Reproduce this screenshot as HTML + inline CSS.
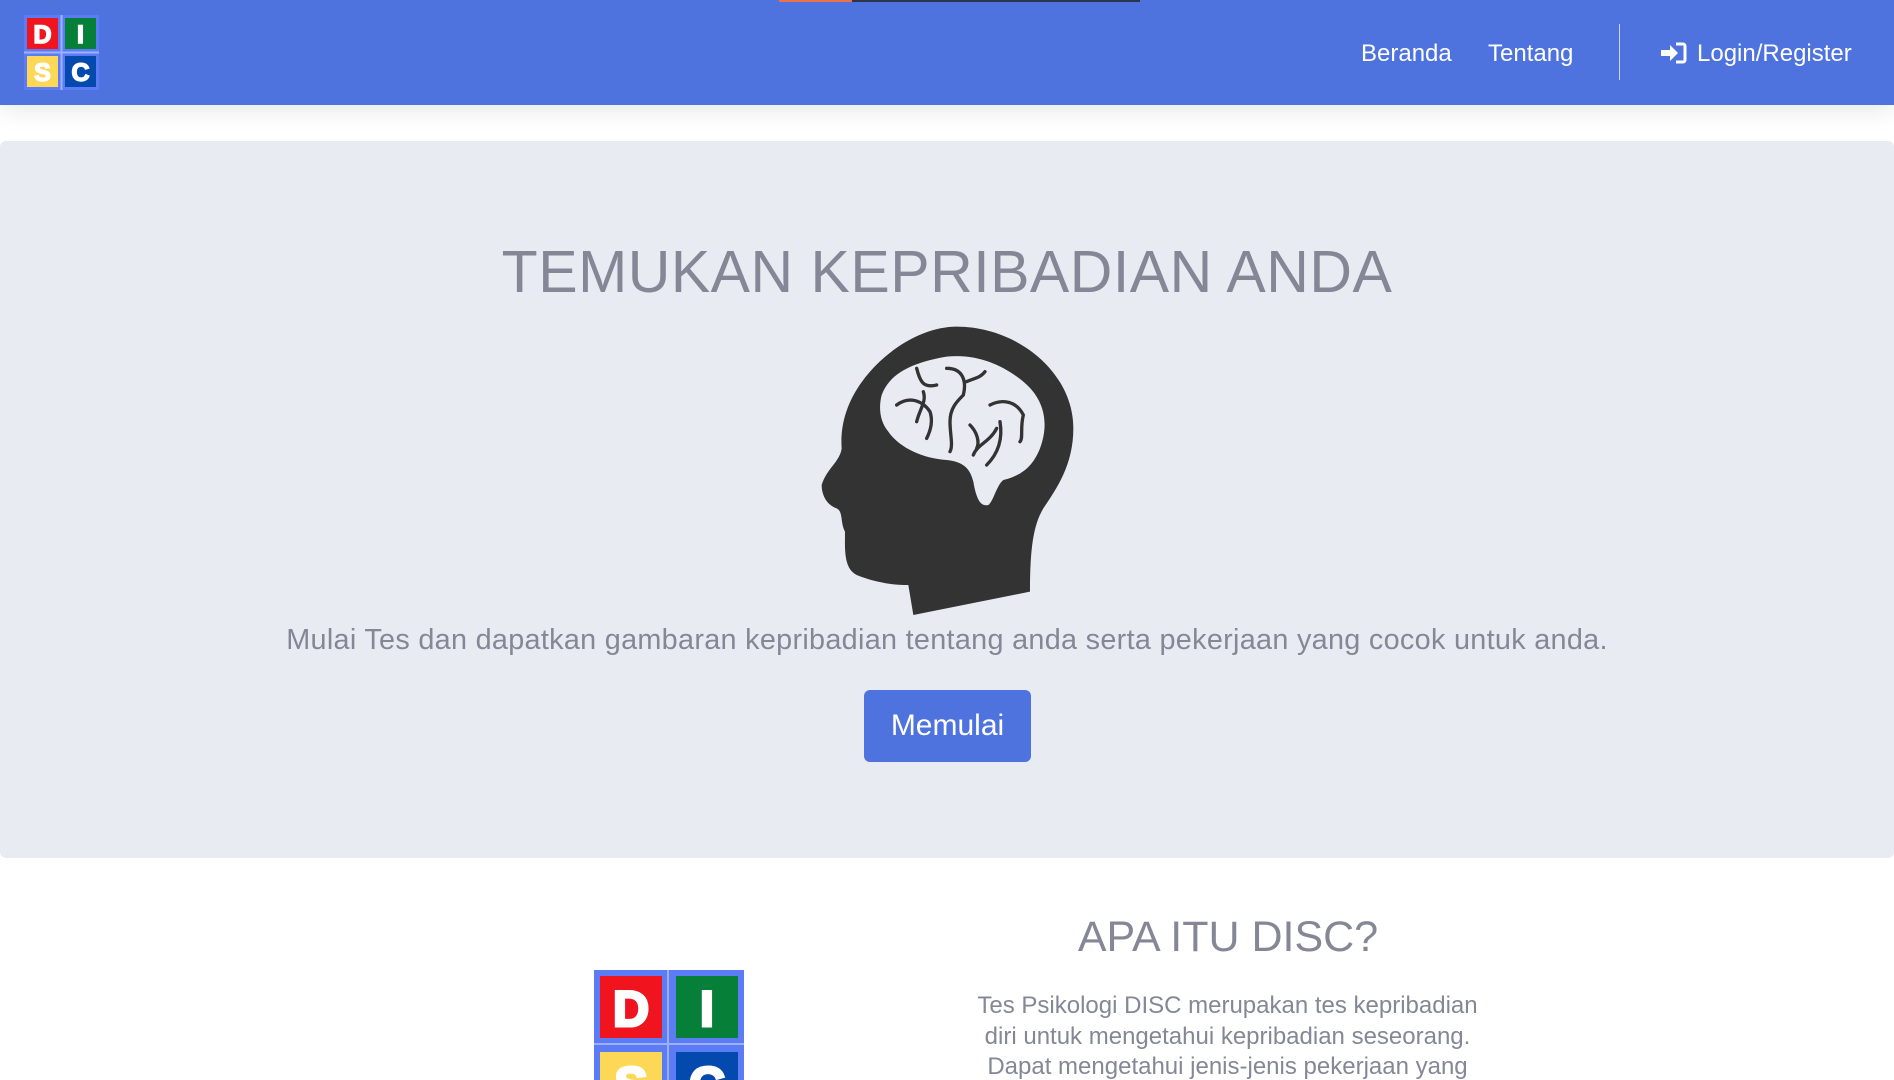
<!DOCTYPE html>
<html><head><meta charset="utf-8"><style>
*{margin:0;padding:0;box-sizing:border-box}
html,body{width:1894px;height:1080px;overflow:hidden}
body{background:#fff;font-family:"Liberation Sans",sans-serif;position:relative}
.nav{position:absolute;left:0;top:0;width:1894px;height:105px;background:#4e73df;box-shadow:0 4px 24px rgba(0,0,0,.10)}
.bar1{position:absolute;left:779px;top:0;width:73px;height:2px;background:#e8734a}
.bar2{position:absolute;left:852px;top:0;width:288px;height:2px;background:#2c3450}
.nl{position:absolute;top:40px;color:#fff;font-size:24px}
.div{position:absolute;left:1619px;top:24px;width:1px;height:56px;background:rgba(255,255,255,.7)}
.hero{position:absolute;left:0;top:141px;width:1894px;height:717px;background:#e9ebf3;border-radius:6px}
.t{position:absolute;left:0;width:1894px;text-align:center;color:#858796;white-space:nowrap}
.btn{position:absolute;left:864px;top:690px;width:167px;height:72px;background:#4e73df;border-radius:6px;color:#fff;font-size:30px;text-align:center;line-height:72px}
</style></head><body>
<div class="nav">
<svg style="position:absolute;left:24px;top:15px" width="75" height="75" viewBox="0 0 75 75">
<rect x="0" y="0" width="75" height="75" fill="#5b7cf5"/>
<rect x="36.5" y="0" width="2" height="75" fill="#9db0ff"/><rect x="0" y="36.5" width="75" height="2" fill="#9db0ff"/>
<rect x="3" y="3" width="31" height="31" fill="#f0141e"/><rect x="41" y="3" width="31" height="31" fill="#067f38"/>
<rect x="3" y="41" width="31" height="31" fill="#fcd856"/><rect x="41" y="41" width="31" height="31" fill="#0449ad"/>
<g font-family="Liberation Sans" font-weight="bold" font-size="25" fill="#fff" text-anchor="middle" stroke="#fff" stroke-width="1.5">
<text x="18.5" y="28">D</text><text x="56.5" y="28">I</text><text x="18.5" y="66">S</text><text x="56.5" y="66">C</text></g>
</svg>
<div class="nl" style="left:1361px">Beranda</div>
<div class="nl" style="left:1488px">Tentang</div>
<div class="div"></div>
<svg style="position:absolute;left:1661px;top:42px" width="26" height="22" viewBox="0 0 26 22"><path d="M0 8h9V3l8 8-8 8v-5H0z" fill="#fff"/><path d="M15 2h7a2 2 0 0 1 2 2v14a2 2 0 0 1-2 2h-7" stroke="#fff" stroke-width="3" fill="none"/></svg>
<div class="nl" style="left:1697px">Login/Register</div>
</div>
<div class="bar1"></div><div class="bar2"></div>
<div class="hero"></div>
<div class="t" style="top:238px;font-size:59px;letter-spacing:0.5px">TEMUKAN KEPRIBADIAN ANDA</div>
<svg style="position:absolute;left:790px;top:315px" width="320" height="310" viewBox="0 0 960 930">
<path d="M95 510 C110 460 150 440 155 400 C150 330 170 250 240 170 C320 80 420 35 500 35 C680 35 850 170 850 340 C850 450 800 520 760 580 C730 630 720 700 720 830 L370 900 L355 810 C300 810 250 800 200 780 C160 760 165 700 165 650 C150 620 160 590 140 580 C110 570 95 540 95 510Z" fill="#333"/>
<path d="M275 240 C300 170 380 140 470 125 C560 115 640 150 700 200 C760 250 780 320 750 400 C730 450 700 480 640 495 C620 510 610 560 595 570 C575 575 560 560 550 500 C540 460 520 440 470 435 C400 430 330 400 295 350 C270 320 265 280 275 240Z" fill="#e9ebf3"/>
<g stroke="#333" stroke-width="10" fill="none" stroke-linecap="round">
<path d="M320 270 C360 240 400 260 420 290 C430 320 420 350 410 370"/><path d="M380 160 C390 200 400 220 440 210"/><path d="M400 230 C410 260 390 280 380 320"/>
<path d="M470 160 C520 160 530 200 520 240 C500 260 480 280 480 320 C480 360 490 390 480 410"/><path d="M530 200 C550 190 570 190 585 170"/>
<path d="M600 270 C640 250 680 260 700 300 C690 340 700 370 690 380"/><path d="M620 340 C600 380 560 390 550 420"/><path d="M630 320 C640 380 620 420 590 450"/><path d="M540 330 C560 350 570 380 560 400"/>
</g>
</svg>
<div class="t" style="top:624px;font-size:28.8px;letter-spacing:0.3px">Mulai Tes dan dapatkan gambaran kepribadian tentang anda serta pekerjaan yang cocok untuk anda.</div>
<div class="btn">Memulai</div>
<div class="t" style="left:1028px;width:400px;top:913px;font-size:43px">APA ITU DISC?</div>
<div class="t" style="left:960px;width:535px;top:991px;font-size:24px;line-height:30.5px;white-space:normal">Tes Psikologi DISC merupakan tes kepribadian diri untuk mengetahui kepribadian seseorang. Dapat mengetahui jenis-jenis pekerjaan yang</div>
<svg style="position:absolute;left:594px;top:970px" width="150" height="150" viewBox="0 0 75 75">
<rect x="0" y="0" width="75" height="75" fill="#5b7cf5"/>
<rect x="36.5" y="0" width="1" height="75" fill="#9db0ff"/><rect x="0" y="36.5" width="75" height="1" fill="#9db0ff"/>
<rect x="3" y="3" width="31" height="31" fill="#f0141e"/><rect x="41" y="3" width="31" height="31" fill="#067f38"/>
<rect x="3" y="41" width="31" height="31" fill="#fcd856"/><rect x="41" y="41" width="31" height="31" fill="#0449ad"/>
<g font-family="Liberation Sans" font-weight="bold" font-size="25" fill="#fff" text-anchor="middle" stroke="#fff" stroke-width="1.5">
<text x="18.5" y="28">D</text><text x="56.5" y="28">I</text><text x="18.5" y="66">S</text><text x="56.5" y="66">C</text></g>
</svg>
</body></html>
